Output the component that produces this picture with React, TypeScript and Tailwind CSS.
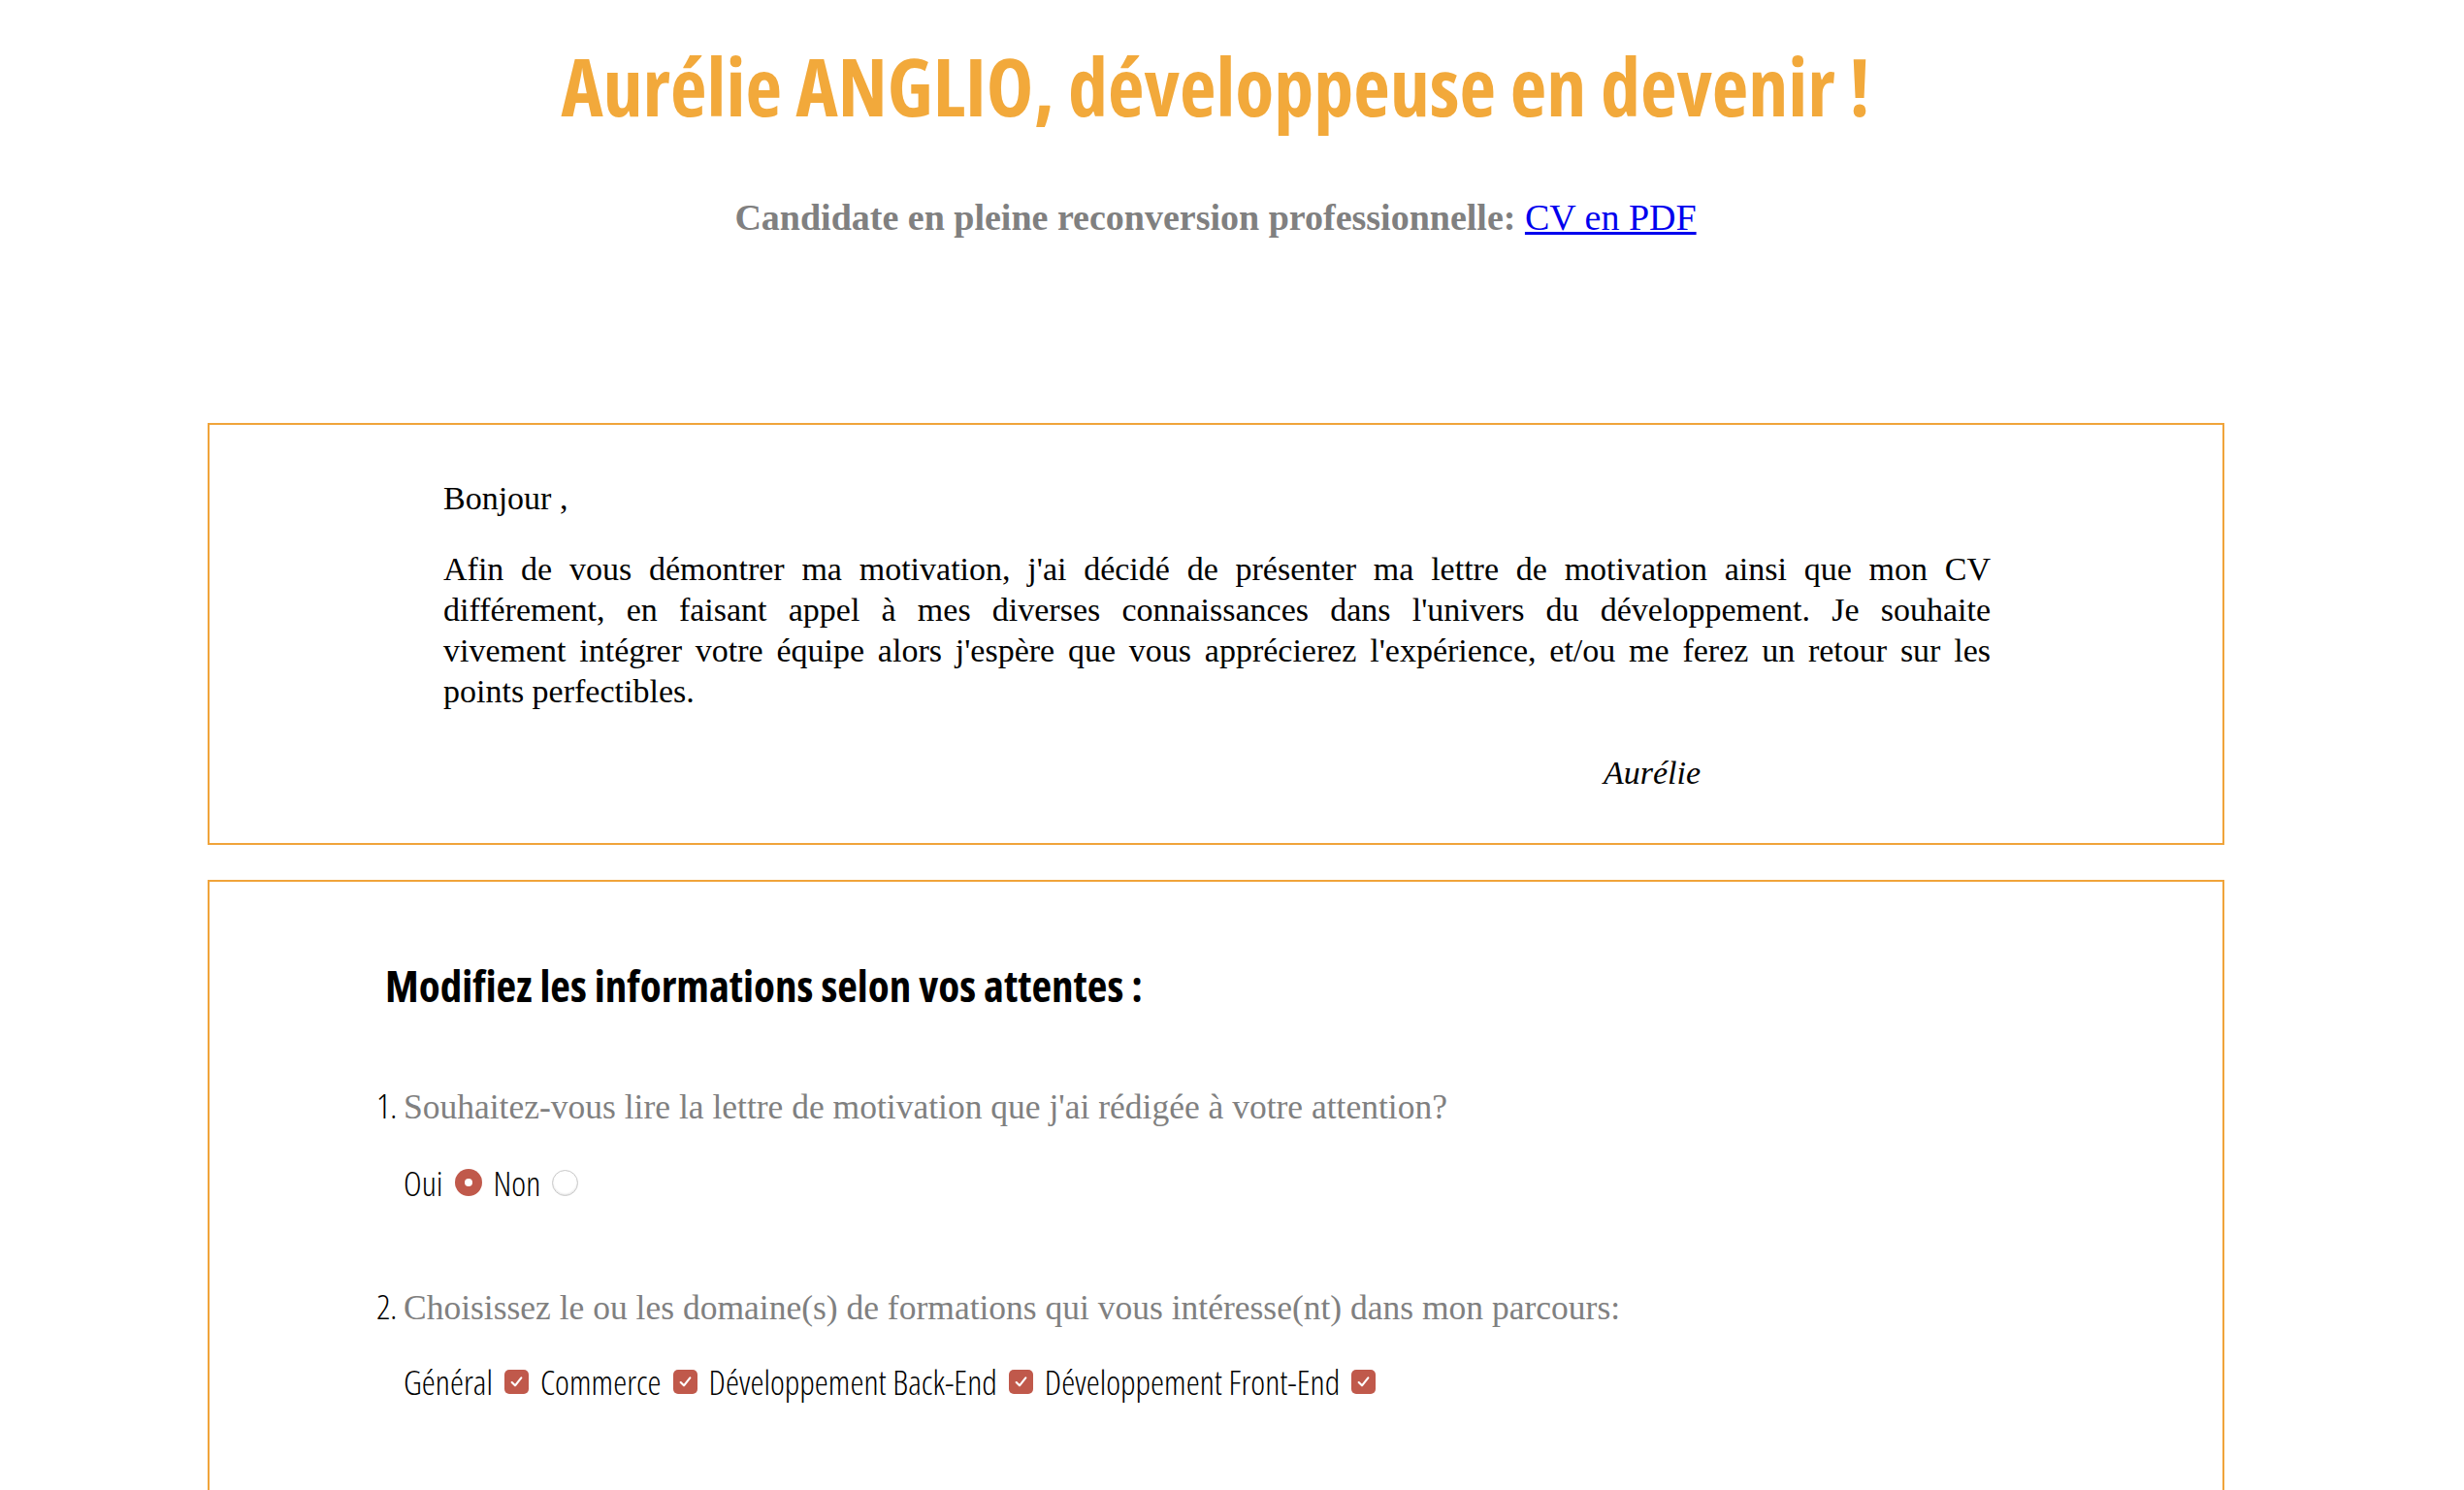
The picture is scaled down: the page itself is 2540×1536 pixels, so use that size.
const sans = "font-['Open_Sans',_'Liberation_Sans',_sans-serif] font-stretch-condensed";
const serif = "font-['Liberation_Serif',_'DejaVu_Serif',_serif]";

const letterLines = [
  "Afin de vous démontrer ma motivation, j'ai décidé de présenter ma lettre de motivation ainsi que mon CV",
  "différement, en faisant appel à mes diverses connaissances dans l'univers du développement. Je souhaite",
  "vivement intégrer votre équipe alors j'espère que vous apprécierez l'expérience, et/ou me ferez un retour sur les",
];

const domains = ["Général", "Commerce", "Développement Back-End", "Développement Front-End"];

function Radio({ checked }: { checked?: boolean }) {
  return checked ? (
    <span className="inline-flex h-[28px] w-[28px] items-center justify-center rounded-full bg-[#c0594b]">
      <span className="h-[8px] w-[8px] rounded-full bg-white" />
    </span>
  ) : (
    <span className="inline-block h-[27px] w-[27px] rounded-full border border-[#c8c8c8] bg-white shadow-[inset_0_-1px_2px_rgba(0,0,0,0.12)]" />
  );
}

function Check() {
  return (
    <span className="inline-flex h-[25px] w-[25px] items-center justify-center rounded-[5px] bg-[#c0594b]">
      <svg width="15" height="15" viewBox="0 0 14 14" fill="none">
        <path d="M2.5 7.5 L5.6 10.6 L11.5 3.2" stroke="white" strokeWidth="2" strokeLinecap="round" strokeLinejoin="round" />
      </svg>
    </span>
  );
}

export default function App() {
  return (
    <div className="min-h-[1536px] w-[2506px] bg-white pb-[200px]">
      <header className="pt-[40px] text-center">
        <h1 className={`${sans} text-[82px] leading-[96px] font-bold text-[#f2a93b]`}>
          Aurélie ANGLIO, développeuse en devenir !
        </h1>
        <h2 className={`${serif} mt-[66px] text-[38px] leading-[44px] font-bold text-[#808080]`}>
          Candidate en pleine reconversion professionnelle:{" "}
          <a href="#" className="font-normal text-[#0000ee] underline">
            CV en PDF
          </a>
        </h2>
      </header>

      <section className="mt-[190px] ml-[214px] mr-[213px] border-2 border-[#f0a43a] pt-[55px] pb-[51px]">
        <div className={`${serif} pl-[241px] pr-[239px] text-[34px] leading-[42px] text-black`}>
          <p>Bonjour ,</p>
          <div className="mt-[31px]">
            {letterLines.map((line) => (
              <p key={line} className="whitespace-nowrap text-justify [text-align-last:justify]">
                {line}
              </p>
            ))}
            <p>points perfectibles.</p>
          </div>
          <p className="mt-[42px] pr-[299px] text-right italic">Aurélie</p>
        </div>
      </section>

      <section className="mt-[36px] ml-[214px] mr-[213px] h-[700px] border-2 border-[#f0a43a] pt-[78px]">
        <h3 className={`${sans} pl-[181px] text-[45px] leading-[58px] font-bold text-black`}>
          Modifiez les informations selon vos attentes :
        </h3>
        <ol className={`${sans} mt-[74px] list-decimal pl-[200px] text-[35.5px] leading-[40px] font-light text-black`}>
          <li>
            <p className={`${serif} text-[35.5px] text-[#808080]`}>
              Souhaitez-vous lire la lettre de motivation que j'ai rédigée à votre attention?
            </p>
            <div className="mt-[38px] flex items-center gap-[12px]">
              <span>Oui</span>
              <Radio checked />
              <span>Non</span>
              <Radio />
            </div>
          </li>
          <li className="mt-[87px]">
            <p className={`${serif} text-[35.5px] text-[#808080]`}>
              Choisissez le ou les domaine(s) de formations qui vous intéresse(nt) dans mon parcours:
            </p>
            <div className="mt-[36px] flex items-center gap-[12px]">
              {domains.map((d) => (
                <span key={d} className="flex items-center gap-[12px]">
                  <span>{d}</span>
                  <Check />
                </span>
              ))}
            </div>
          </li>
        </ol>
      </section>
    </div>
  );
}
